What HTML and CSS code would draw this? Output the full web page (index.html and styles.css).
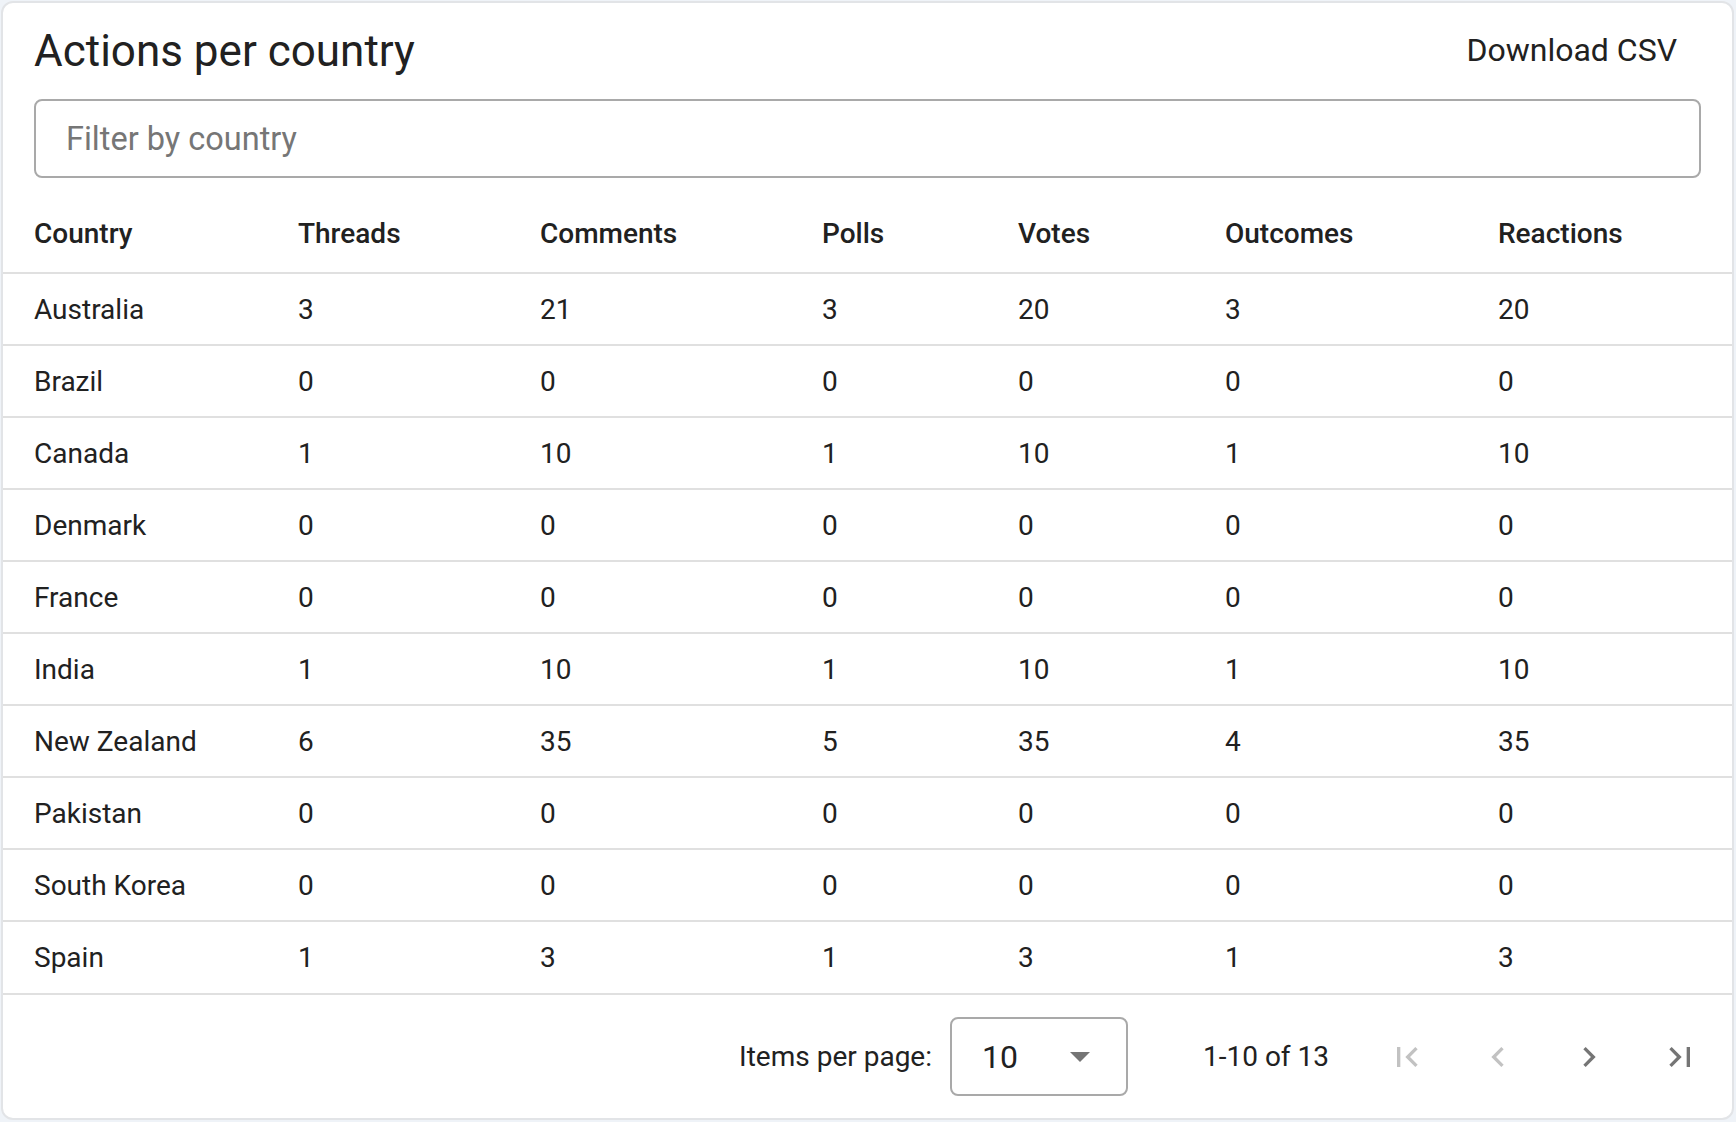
FILE: index.html
```html
<!DOCTYPE html>
<html lang="en">
<head>
<meta charset="utf-8">
<title>Actions per country</title>
<link rel="stylesheet" href="styles.css">
</head>
<body>
<div class="card">
  <div class="card-head">
    <h1 class="title">Actions per country</h1>
    <button class="btn-text">Download CSV</button>
  </div>
  <div class="filter">
    <input class="filter-input" type="text" placeholder="Filter by country">
  </div>
  <table class="data">
    <colgroup>
      <col class="c1"><col class="c2"><col class="c3"><col class="c4"><col class="c5"><col class="c6"><col class="c7">
    </colgroup>
    <thead>
      <tr><th>Country</th><th>Threads</th><th>Comments</th><th>Polls</th><th>Votes</th><th>Outcomes</th><th>Reactions</th></tr>
    </thead>
    <tbody>
      <tr><td>Australia</td><td>3</td><td>21</td><td>3</td><td>20</td><td>3</td><td>20</td></tr>
      <tr><td>Brazil</td><td>0</td><td>0</td><td>0</td><td>0</td><td>0</td><td>0</td></tr>
      <tr><td>Canada</td><td>1</td><td>10</td><td>1</td><td>10</td><td>1</td><td>10</td></tr>
      <tr><td>Denmark</td><td>0</td><td>0</td><td>0</td><td>0</td><td>0</td><td>0</td></tr>
      <tr><td>France</td><td>0</td><td>0</td><td>0</td><td>0</td><td>0</td><td>0</td></tr>
      <tr><td>India</td><td>1</td><td>10</td><td>1</td><td>10</td><td>1</td><td>10</td></tr>
      <tr><td>New Zealand</td><td>6</td><td>35</td><td>5</td><td>35</td><td>4</td><td>35</td></tr>
      <tr><td>Pakistan</td><td>0</td><td>0</td><td>0</td><td>0</td><td>0</td><td>0</td></tr>
      <tr><td>South Korea</td><td>0</td><td>0</td><td>0</td><td>0</td><td>0</td><td>0</td></tr>
      <tr><td>Spain</td><td>1</td><td>3</td><td>1</td><td>3</td><td>1</td><td>3</td></tr>
    </tbody>
  </table>
  <div class="paginator">
    <span class="per-page-label">Items per page:</span>
    <div class="select">
      <span class="select-value">10</span>
      <svg class="select-arrow" width="20" height="10" viewBox="0 0 20 10"><path d="M0 0h20L10 10z"/></svg>
    </div>
    <span class="range">1-10 of 13</span>
    <button class="icon-btn disabled" aria-label="First page">
      <svg viewBox="0 0 24 24" width="40" height="40"><path d="M18.41 16.59L13.82 12l4.59-4.59L17 6l-6 6 6 6zM6 6h2v12H6z"/></svg>
    </button>
    <button class="icon-btn disabled" aria-label="Previous page">
      <svg viewBox="0 0 24 24" width="40" height="40"><path d="M15.41 7.41L14 6l-6 6 6 6 1.41-1.41L10.83 12z"/></svg>
    </button>
    <button class="icon-btn" aria-label="Next page">
      <svg viewBox="0 0 24 24" width="40" height="40"><path d="M10 6L8.59 7.41 13.17 12l-4.58 4.59L10 18l6-6z"/></svg>
    </button>
    <button class="icon-btn" aria-label="Last page">
      <svg viewBox="0 0 24 24" width="40" height="40"><path d="M5.59 7.41L10.18 12l-4.59 4.59L7 18l6-6-6-6zM16 6h2v12h-2z"/></svg>
    </button>
  </div>
</div>
</body>
</html>
```

FILE: styles.css
```css
html, body {
  margin: 0;
  padding: 0;
}
body {
  background: #eff3f8;
  font-family: Roboto, "Liberation Sans", Arial, sans-serif;
  color: #212121;
  padding: 1px 2px 2px 1px;
  box-sizing: border-box;
  height: 1122px;
}
.card {
  background: #fff;
  border: 2px solid #e2e4e7;
  border-radius: 12px;
  height: 1119px;
  box-sizing: border-box;
  display: flex;
  flex-direction: column;
}
.card-head {
  display: flex;
  align-items: center;
  justify-content: space-between;
  padding: 22px 31px 0 31px;
}
.title {
  margin: 0;
  font-size: 44px;
  font-weight: 400;
  line-height: 52px;
  color: #212121;
}
.btn-text {
  font-family: inherit;
  font-size: 32px;
  color: #212121;
  background: none;
  border: 0;
  padding: 0 24px;
  line-height: 40px;
  margin-top: -3px;
}
.filter {
  padding: 22px 31px 0 31px;
}
.filter-input {
  display: block;
  width: 100%;
  box-sizing: border-box;
  height: 79px;
  border: 2px solid #a9a9a9;
  border-radius: 8px;
  padding: 0 30px;
  font-family: inherit;
  font-size: 32.5px;
  color: #212121;
  outline: none;
}
.filter-input::placeholder {
  color: #767676;
}
.data {
  margin-top: 12px;
  width: 100%;
  border-collapse: collapse;
  table-layout: fixed;
}
.c1 { width: 295px; }
.c2 { width: 242px; }
.c3 { width: 282px; }
.c4 { width: 196px; }
.c5 { width: 207px; }
.c6 { width: 273px; }
.c7 { width: 234px; }
.data th,
.data td {
  text-align: left;
  padding: 0;
  border-bottom: 2px solid #e0e0e0;
  font-size: 28px;
  color: #212121;
  white-space: nowrap;
}
.data th {
  font-weight: 500;
  height: 78px;
  padding-top: 4px;
}
.data td {
  font-weight: 400;
  height: 70px;
}
.data tbody tr:last-child td {
  height: 71px;
}
.data th:first-child,
.data td:first-child {
  padding-left: 31px;
}
.paginator {
  flex: 1;
  display: flex;
  align-items: center;
  justify-content: flex-end;
  padding-right: 7px;
  font-size: 28px;
  color: #212121;
}
.per-page-label {
  margin-right: 18px;
}
.select {
  width: 178px;
  height: 79px;
  box-sizing: border-box;
  border: 2px solid #a9a9a9;
  border-radius: 8px;
  display: flex;
  align-items: center;
  justify-content: space-between;
  padding: 0 36px 0 30px;
}
.select-value {
  font-size: 32px;
  color: #212121;
}
.select-arrow {
  fill: #757575;
}
.range {
  margin-left: 75px;
  margin-right: 32px;
}
.icon-btn {
  width: 91px;
  height: 80px;
  border: 0;
  background: none;
  padding: 0;
  display: flex;
  align-items: center;
  justify-content: center;
  fill: #757575;
}
.icon-btn.disabled {
  fill: #c2c2c2;
}
```
